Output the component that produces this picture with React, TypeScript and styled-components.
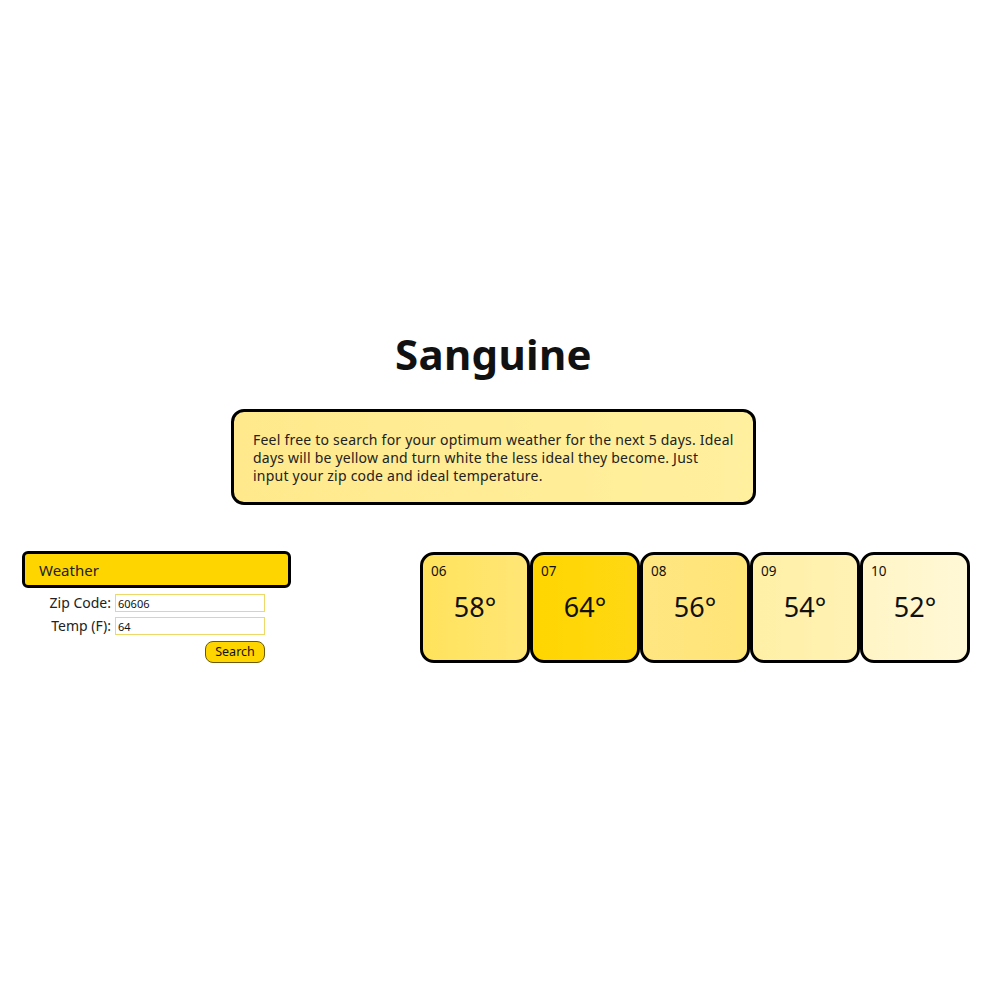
import React from "react";
import styled, { createGlobalStyle } from "styled-components";

const Global = createGlobalStyle`
  html, body { margin: 0; padding: 0; background: #ffffff; }
  body { font-family: "Noto Sans", "Open Sans", sans-serif; color: #111; }
  * { box-sizing: border-box; }
`;

const Page = styled.div`
  min-height: 1000px;
  display: flex;
  flex-direction: column;
  align-items: stretch;
  padding-top: 326px;
`;

const Title = styled.h1`
  margin: 0;
  text-align: center;
  font-size: 42px;
  font-weight: 700;
  line-height: 56px;
  letter-spacing: 0.3px;
  padding-right: 13px;
`;

const Intro = styled.div`
  align-self: center;
  margin-top: 27px;
  margin-left: -13px;
  width: 525px;
  height: 96px;
  border: 3px solid #000;
  border-radius: 13px;
  background: linear-gradient(to right, #ffe98c, #fff09f);
  padding: 19px 10px 0 19px;
  font-size: 14px;
  line-height: 18px;
  letter-spacing: 0.22px;
  color: #222;
  white-space: nowrap;
`;

const Row = styled.div`
  margin-top: 46px;
  display: flex;
  justify-content: space-between;
  align-items: flex-start;
  padding: 0 30px 0 22px;
`;

const Panel = styled.div`
  width: 269px;
  display: flex;
  flex-direction: column;
`;

const PanelHead = styled.div`
  height: 37px;
  border: 3px solid #000;
  border-radius: 6px;
  background: #ffd500;
  padding: 0 0 0 14px;
  display: flex;
  align-items: center;
  font-size: 15px;
  color: #222;
`;

const Form = styled.div`
  margin-top: 6px;
  width: 243px;
  display: grid;
  grid-template-columns: 89px 150px;
  column-gap: 4px;
  row-gap: 5px;
  align-items: center;
`;

const Label = styled.label`
  text-align: right;
  font-size: 14px;
  color: #222;
  line-height: 18px;
`;

const Field = styled.input`
  width: 150px;
  height: 18px;
  border: 1px solid #ecd96a;
  background: #fff;
  font-family: "Noto Sans", sans-serif;
  font-size: 11px;
  padding: 0 2px;
  color: #111;
  outline: none;
`;

const ButtonCell = styled.div`
  grid-column: 1 / span 2;
  display: flex;
  justify-content: flex-end;
  margin-top: 1px;
`;

const SearchButton = styled.button`
  width: 60px;
  height: 22px;
  border: 1px solid #6b5a00;
  border-radius: 8px;
  background: #ffd500;
  font-family: "Noto Sans", sans-serif;
  font-size: 12.5px;
  color: #111;
  padding: 0;
  line-height: 18px;
`;

const Cards = styled.div`
  display: flex;
  margin-top: 1px;
`;

const Card = styled.div<{ $from: string; $to: string }>`
  width: 110px;
  height: 111px;
  border: 3px solid #000;
  border-radius: 14px;
  background: linear-gradient(to right, ${(p) => p.$from}, ${(p) => p.$to});
  display: flex;
  flex-direction: column;
  padding: 7px 0 0 8px;
`;

const Day = styled.div`
  font-size: 13.5px;
  line-height: 18px;
  color: #111;
`;

const Temp = styled.div`
  margin-top: 10px;
  padding-right: 8px;
  text-align: center;
  font-size: 27px;
  line-height: 34px;
  color: #111;
`;

const days = [
  { day: "06", temp: 58, from: "#ffe35c", to: "#ffe676" },
  { day: "07", temp: 64, from: "#ffd600", to: "#ffd814" },
  { day: "08", temp: 56, from: "#ffe680", to: "#ffe478" },
  { day: "09", temp: 54, from: "#fff0a6", to: "#fff2b4" },
  { day: "10", temp: 52, from: "#fff5c6", to: "#fff8d6" },
];

export default function App() {
  return (
    <>
      <Global />
      <Page>
        <Title>Sanguine</Title>
        <Intro>
          Feel free to search for your optimum weather for the next 5 days. Ideal
          <br />
          days will be yellow and turn white the less ideal they become. Just
          <br />
          input your zip code and ideal temperature.
        </Intro>
        <Row>
          <Panel>
            <PanelHead>Weather</PanelHead>
            <Form>
              <Label htmlFor="zip">Zip Code:</Label>
              <Field id="zip" defaultValue="60606" />
              <Label htmlFor="temp">Temp (F):</Label>
              <Field id="temp" defaultValue="64" />
              <ButtonCell>
                <SearchButton>Search</SearchButton>
              </ButtonCell>
            </Form>
          </Panel>
          <Cards>
            {days.map((d) => (
              <Card key={d.day} $from={d.from} $to={d.to}>
                <Day>{d.day}</Day>
                <Temp>{d.temp}°</Temp>
              </Card>
            ))}
          </Cards>
        </Row>
      </Page>
    </>
  );
}
